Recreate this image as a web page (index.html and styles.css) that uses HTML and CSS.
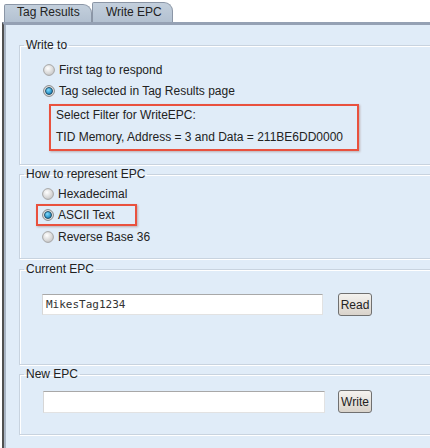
FILE: index.html
```html
<!DOCTYPE html>
<html>
<head>
<meta charset="utf-8">
<link rel="stylesheet" href="styles.css">
</head>
<body>
<div class="tabs">
  <div class="tab tab-results">Tag Results</div>
  <div class="tab tab-write">Write EPC</div>
</div>
<div class="panel">
  <fieldset class="group g-write">
    <legend>Write to</legend>
    <div class="options">
      <label class="opt">
        <svg class="radio" viewBox="0 0 12 12"><defs><radialGradient id="ru1" cx="40%" cy="35%" r="70%"><stop offset="0" stop-color="#ffffff"/><stop offset="1" stop-color="#c4c4c4"/></radialGradient></defs><circle cx="6" cy="6" r="5.4" fill="url(#ru1)" stroke="#a6a6a6" stroke-width="1"/></svg>
        <span>First tag to respond</span>
      </label>
      <label class="opt">
        <svg class="radio" viewBox="0 0 12 12"><defs><radialGradient id="rc1" cx="40%" cy="35%" r="70%"><stop offset="0" stop-color="#7fdcff"/><stop offset="1" stop-color="#0a78b4"/></radialGradient></defs><circle cx="6" cy="6" r="5.4" fill="#e6e6e6" stroke="#858585" stroke-width="1"/><circle cx="6" cy="6" r="3.5" fill="url(#rc1)" stroke="#23465c" stroke-width="0.9"/></svg>
        <span>Tag selected in Tag Results page</span>
      </label>
    </div>
    <div class="filter">
      <div>Select Filter for WriteEPC:</div>
      <div>TID Memory, Address = 3 and Data = 211BE6DD0000</div>
    </div>
  </fieldset>

  <fieldset class="group g-rep">
    <legend>How to represent EPC</legend>
    <div class="options2">
      <label class="opt">
        <svg class="radio" viewBox="0 0 12 12"><defs><radialGradient id="ru2" cx="40%" cy="35%" r="70%"><stop offset="0" stop-color="#ffffff"/><stop offset="1" stop-color="#c4c4c4"/></radialGradient></defs><circle cx="6" cy="6" r="5.4" fill="url(#ru2)" stroke="#a6a6a6" stroke-width="1"/></svg>
        <span>Hexadecimal</span>
      </label>
      <label class="opt opt-marked">
        <svg class="radio" viewBox="0 0 12 12"><defs><radialGradient id="rc2" cx="40%" cy="35%" r="70%"><stop offset="0" stop-color="#7fdcff"/><stop offset="1" stop-color="#0a78b4"/></radialGradient></defs><circle cx="6" cy="6" r="5.4" fill="#e6e6e6" stroke="#858585" stroke-width="1"/><circle cx="6" cy="6" r="3.5" fill="url(#rc2)" stroke="#23465c" stroke-width="0.9"/></svg>
        <span>ASCII Text</span>
      </label>
      <label class="opt">
        <svg class="radio" viewBox="0 0 12 12"><defs><radialGradient id="ru3" cx="40%" cy="35%" r="70%"><stop offset="0" stop-color="#ffffff"/><stop offset="1" stop-color="#c4c4c4"/></radialGradient></defs><circle cx="6" cy="6" r="5.4" fill="url(#ru3)" stroke="#a6a6a6" stroke-width="1"/></svg>
        <span>Reverse Base 36</span>
      </label>
    </div>
  </fieldset>

  <fieldset class="group g-current">
    <legend>Current EPC</legend>
    <div class="field-row">
      <div class="textbox tb-current">MikesTag1234</div>
      <button class="btn">Read</button>
    </div>
  </fieldset>

  <fieldset class="group g-new">
    <legend>New EPC</legend>
    <div class="field-row row-new">
      <div class="textbox tb-new"></div>
      <button class="btn">Write</button>
    </div>
  </fieldset>
</div>
</body>
</html>
```

FILE: styles.css
```css
html, body {
  margin: 0;
  padding: 0;
  background: #ffffff;
  overflow: hidden;
  width: 430px;
  height: 448px;
}
body {
  font-family: "Liberation Sans", Arial, sans-serif;
  font-size: 12px;
  color: #222;
}
.tabs {
  height: 22px;
  display: flex;
  align-items: flex-end;
  padding-left: 4px;
  box-sizing: border-box;
}
.tab {
  box-sizing: border-box;
  background: linear-gradient(#c3cfdc, #b3c1d1);
  border: 1px solid #8b96a6;
  border-bottom: none;
  border-radius: 2px 9px 0 0;
  line-height: 15px;
  color: #222;
}
.tab-results {
  width: 88px;
  height: 18px;
  padding-left: 12px;
}
.tab-write {
  width: 81px;
  height: 20px;
  padding-left: 13px;
  padding-top: 2px;
}
.panel {
  margin-left: 2px;
  width: 428px;
  height: 426px;
  overflow: hidden;
  box-sizing: border-box;
  border-left: 2px solid #505050;
  border-top: 3px solid #95a1b4;
  box-shadow: inset 2px 0 0 #a9b5c4;
  background: #e0ecf8;
  padding: 13px 0 0 15px;
}
.group {
  margin: 0;
  padding: 0 0 0 4px;
  border: 1px solid #c8d3df;
  box-shadow: inset 1px 1px 0 #ffffff, 1px 1px 0 #ffffff;
  box-sizing: border-box;
  width: 480px;
  min-width: 0;
  flex: none;
}
.group legend {
  padding: 0 2px;
  line-height: 14px;
  height: 14px;
  color: #222;
}
.g-write { height: 127px; }
.g-rep { height: 92px; margin-top: 2px; }
.g-current { height: 103px; margin-top: 3px; }
.g-new { height: 68px; margin-top: 2px; }

.opt {
  display: flex;
  align-items: center;
  gap: 4px;
  height: 20px;
}
.radio {
  width: 12px;
  height: 12px;
  flex: none;
}
.options {
  padding: 8px 0 0 19px;
  display: flex;
  flex-direction: column;
  gap: 1px;
}
.filter {
  margin: 3px 0 0 25px;
  width: 310px;
  height: 47px;
  box-sizing: border-box;
  border: 2px solid #e9513e;
  box-shadow: 1px 1px 2px rgba(120, 60, 50, 0.35);
  padding: 0 0 0 5px;
  display: flex;
  flex-direction: column;
  gap: 4px;
}
.filter div {
  line-height: 18px;
}
.options2 {
  padding: 2px 0 0 18px;
  display: flex;
  flex-direction: column;
}
.options2 .opt { height: 21px; }
.options2 .opt-marked {
  align-self: flex-start;
  box-sizing: border-box;
  height: 22px;
  width: 101px;
  margin-left: -6px;
  padding-left: 4px;
  border: 2px solid #e9513e;
  box-shadow: 1px 1px 2px rgba(120, 60, 50, 0.35);
}
.field-row {
  display: flex;
  align-items: center;
  gap: 15px;
  padding: 17px 0 0 18px;
}
.row-new {
  padding-top: 9px;
  padding-left: 19px;
  gap: 13px;
}
.textbox {
  box-sizing: border-box;
  height: 21px;
  background: #ffffff;
  border: 1px solid #e2e2e2;
  border-top-color: #a8a8a8;
  border-left-color: #d6d6d6;
  font-family: "DejaVu Sans Mono", monospace;
  font-size: 11px;
  line-height: 19px;
  padding-left: 3px;
  color: #333;
}
.tb-current { width: 281px; }
.tb-new { width: 282px; height: 22px; }
.btn {
  box-sizing: border-box;
  width: 34px;
  height: 23px;
  padding: 0;
  margin: 0;
  font-family: "Liberation Sans", Arial, sans-serif;
  font-size: 12px;
  color: #222;
  border: 1px solid #707070;
  border-radius: 3px;
  background: linear-gradient(#f4f2ef, #d9d3cb);
}
```
